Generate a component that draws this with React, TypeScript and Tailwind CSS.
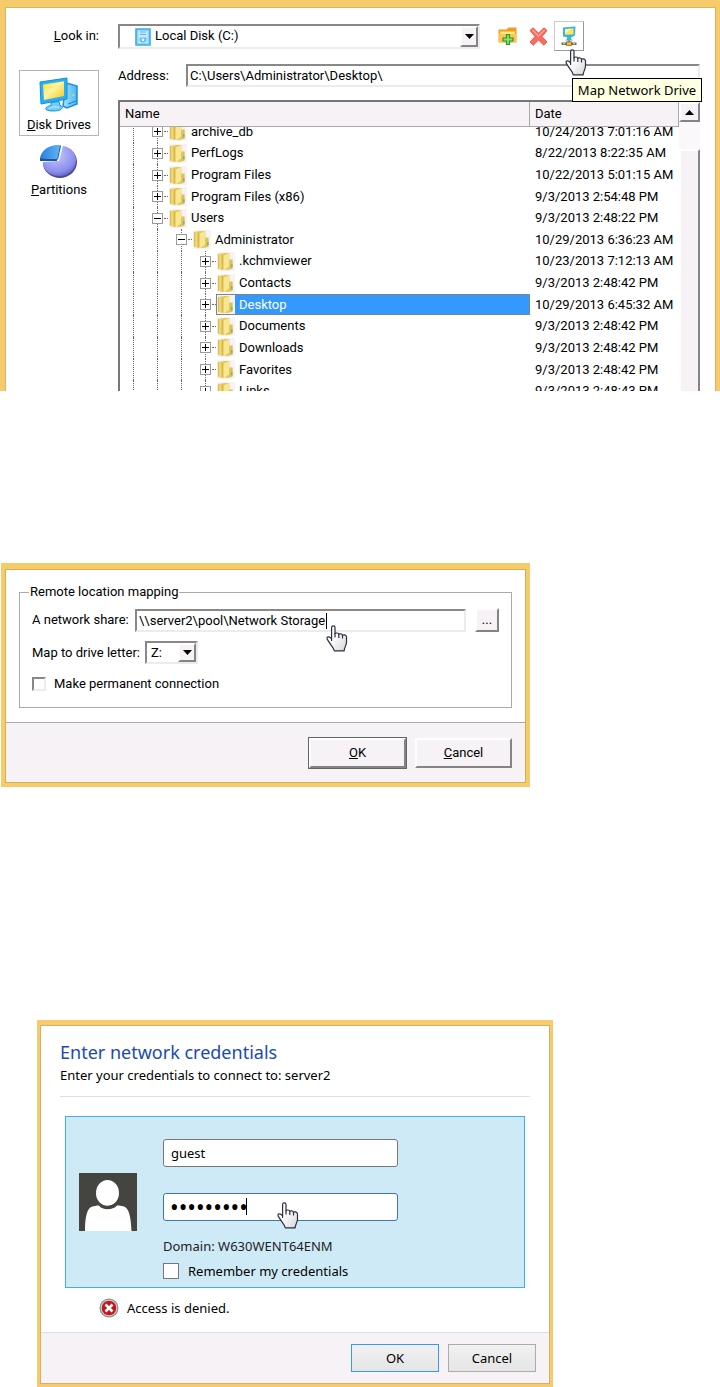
import { useLayoutEffect, useRef, useState } from 'react';

interface TreeRow {
  name: string;
  date: string;
  depth: number;
  open?: boolean;
}

const rows: TreeRow[] = [
  { name: 'archive_db', date: '10/24/2013 7:01:16 AM', depth: 1 },
  { name: 'PerfLogs', date: '8/22/2013 8:22:35 AM', depth: 1 },
  { name: 'Program Files', date: '10/22/2013 5:01:15 AM', depth: 1 },
  { name: 'Program Files (x86)', date: '9/3/2013 2:54:48 PM', depth: 1 },
  { name: 'Users', date: '9/3/2013 2:48:22 PM', depth: 1, open: true },
  { name: 'Administrator', date: '10/29/2013 6:36:23 AM', depth: 2, open: true },
  { name: '.kchmviewer', date: '10/23/2013 7:12:13 AM', depth: 3 },
  { name: 'Contacts', date: '9/3/2013 2:48:42 PM', depth: 3 },
  { name: 'Desktop', date: '10/29/2013 6:45:32 AM', depth: 3 },
  { name: 'Documents', date: '9/3/2013 2:48:42 PM', depth: 3 },
  { name: 'Downloads', date: '9/3/2013 2:48:42 PM', depth: 3 },
  { name: 'Favorites', date: '9/3/2013 2:48:42 PM', depth: 3 },
  { name: 'Links', date: '9/3/2013 2:48:43 PM', depth: 3 },
];

const sunken = 'border-2 border-t-[#888] border-l-[#888] border-r-[#ececec] border-b-[#ececec] bg-white';
const raised = 'border-2 border-t-white border-l-white border-r-[#858385] border-b-[#858385] bg-[#f6f2f6]';

/* Icons */

function HandCursor({ className }: { className: string }) {
  return (
    <svg className={`pointer-events-none absolute z-20 ${className}`} width="22" height="27" viewBox="0 0 22 27" aria-hidden="true">
      <defs>
        <linearGradient id="hand" x1="0" y1="0" x2="1" y2="1">
          <stop offset="0.4" stopColor="#fff" />
          <stop offset="1" stopColor="#d4d4d8" />
        </linearGradient>
      </defs>
      <path
        d="M5.6 15.500V2.600a1.700 1.700 0 0 1 3.400 0v6.200c.8-1.300 3.500-1 3.800.6.7-1.100 3.300-.7 3.700.9.900-1 3.700-.5 4 1.600v5.300c0 2.600-1.900 4.600-2.400 8.700H8.300C7.600 22.500 4.900 20.500 3.400 17.600 2.500 15.800.9 14.500 1 13c.3-1.900 2.900-1.500 4.600 1z"
        fill="url(#hand)"
        stroke="#2a2f42"
        strokeWidth="1.200"
        strokeLinejoin="round"
      />
      <path d="M9 8.500v4M12.800 9.200v3.800M16.500 10.300v3.200" stroke="#2a2f42" strokeWidth="1.200" />
    </svg>
  );
}

function DownArrow() {
  return (
    <svg width="9" height="5" viewBox="0 0 9 5" aria-hidden="true">
      <path d="M0 0h9L4.500 5z" fill="#000" />
    </svg>
  );
}

function FolderIcon() {
  return (
    <svg className="shrink-0" width="18" height="19" viewBox="0 0 19 20" aria-hidden="true">
      <defs>
        <linearGradient id="folder" x1="0" x2="1">
          <stop offset="0" stopColor="#d3ae35" />
          <stop offset="0.400" stopColor="#f3df86" />
          <stop offset="1" stopColor="#dcb945" />
        </linearGradient>
      </defs>
      <path d="M0 0h19v20H0z" fill="#f7f2f7" />
      <path d="M1 2l7-1h5v9l3 1v7l-5 1-9-1-1-1z" fill="#e6c95c" />
      <path d="M1 2l5 1v16l-4-1-1-1z" fill="url(#folder)" />
      <path d="M6.500 4L13 1v14l-6 4.500-1-1z" fill="#f7e793" />
      <path d="M6.300 3.500v15" stroke="#cfa93a" strokeWidth=".8" />
      <path d="M13 8h3.500v9.500L13 18z" fill="#e0c052" />
      <path d="M15 13h1.300v3H15z" fill="#4bb1b4" />
    </svg>
  );
}

function DiskIcon() {
  return (
    <svg width="16" height="18" viewBox="0 0 16 18" aria-hidden="true">
      <path d="M1 1h14v16H1z" fill="#8fd6fb" stroke="#3fa9ec" strokeWidth="1.600" />
      <path d="M3.500 3h9v12h-9z" fill="#c5ecff" />
      <path d="M5 4h6M5 6.500h6" stroke="#5ab3ea" />
      <path d="M4.500 9.500h7v3.500l-2 1.500h-3l-2-1.500z" fill="#6cc0f3" />
      <circle cx="8" cy="11.700" r="1.200" fill="#fff" />
    </svg>
  );
}

function NewFolderIcon() {
  return (
    <svg width="19" height="19" viewBox="0 0 19 19" aria-hidden="true">
      <path d="M.5 2.500h8l2-2h8v15H.5z" fill="#f79a1e" />
      <path d="M2 4.500h15v3H2z" fill="#ffe680" />
      <path d="M1 7h17v8H1z" fill="#fcc751" />
      <path d="M8.500 7.500h3v3.500H15v3h-3.500v3.500h-3V14H5v-3h3.500z" fill="#8fe070" stroke="#299a2a" strokeWidth="1.200" />
    </svg>
  );
}

function DeleteIcon() {
  return (
    <svg width="19" height="19" viewBox="0 0 19 19" aria-hidden="true">
      <path
        d="M1 3.500L4 .8l5.500 5.200L15 .8l3 2.700-5 6 5 5.500-3.300 3.200-5.200-5.200-5.200 5.200L1 15l5-5.500z"
        fill="#f46e63"
        stroke="#e8453f"
        strokeWidth=".8"
        strokeLinejoin="round"
      />
      <path d="M3.500 3l6 6 6-6" stroke="#fba59a" strokeWidth="1.300" fill="none" />
    </svg>
  );
}

function NetDriveIcon() {
  return (
    <svg width="16" height="20" viewBox="0 0 16 20" aria-hidden="true">
      <path d="M2 1.500L14.500.5l-.5 9-4 2-8-1z" fill="#35b1ee" />
      <path d="M4 3.200l8.500-1v6.300L4 8.800z" fill="#fbe94e" />
      <path d="M4 3.200l6-.7L4 8z" fill="#fff8a8" />
      <path d="M6 10.500h4v2.500l2 1.500H4l2-1.500z" fill="#35b5f4" />
      <path d="M7 14.500h2v2H7z" fill="#777" />
      <path d="M.5 16.500h15v2.500H.5z" fill="#6d6a55" />
      <path d="M5.500 15.800h5v3.700h-5z" fill="#f3bd36" stroke="#8f6b12" strokeWidth=".8" />
      <path d="M2 17.700h2M12 17.700h2" stroke="#ddd" />
    </svg>
  );
}

function ComputerIcon() {
  return (
    <svg width="40" height="36" viewBox="0 0 40 36" aria-hidden="true">
      <defs>
        <linearGradient id="screen" x1="0" y1="0" x2="1" y2="1">
          <stop offset="0" stopColor="#ffdd2c" />
          <stop offset="0.450" stopColor="#fff3a0" />
          <stop offset="1" stopColor="#f3c514" />
        </linearGradient>
        <linearGradient id="tower" x1="0" x2="1">
          <stop offset="0" stopColor="#a8e0ff" />
          <stop offset="1" stopColor="#4cb6f2" />
        </linearGradient>
      </defs>
      <path d="M27 6l11 3v18l-10 4-4-2z" fill="url(#tower)" stroke="#1c8edb" strokeWidth="1.500" />
      <path d="M29 27l8-3" stroke="#157cc9" />
      <circle cx="34.500" cy="18" r="1.200" fill="#c8dc5a" />
      <path d="M1 5l27-4v21L2 27z" fill="#29b0f2" stroke="#168ddb" />
      <path d="M4 7.500l21-3.300v14.800L5 23z" fill="url(#screen)" />
      <path d="M12 25.500l8-1 1 4c3 1 3 2 1 4-4 2-12 2-15 0-1-2 1-3 5-4z" fill="#6fcdfa" stroke="#1690dc" />
      <path d="M10 31.500c3-2 7-2 10-1" stroke="#c9f1ff" fill="none" />
    </svg>
  );
}

function PieIcon() {
  return (
    <svg width="40" height="36" viewBox="0 0 40 36" aria-hidden="true">
      <defs>
        <radialGradient id="pie" cx=".4" cy=".3" r=".8">
          <stop offset="0" stopColor="#c6c9fb" />
          <stop offset="0.700" stopColor="#8c8fec" />
          <stop offset="1" stopColor="#5657b8" />
        </radialGradient>
        <linearGradient id="slice" x1="0" x2="1">
          <stop offset="0" stopColor="#2b7fdd" />
          <stop offset="1" stopColor="#5fb4f5" />
        </linearGradient>
      </defs>
      <path d="M21 20L25 3c8 1 13 8 13 15 0 9-8 16-17 16S4 27 4 19.500z" fill="#4d4b9a" />
      <path d="M20 17L24 2c8 1 13 7 13 14 0 9-7 16-17 16C11 32 4 26 4 18z" fill="url(#pie)" />
      <path d="M18 15L21 1C11 0 2 6 1 14z" fill="url(#slice)" />
      <path d="M1 14l17 1v2L1 17z" fill="#1655a8" />
      <path d="M18 15L21 1l1 1-3 14z" fill="#1d5fb5" />
    </svg>
  );
}

function UserIcon() {
  return (
    <svg className="shrink-0" width="58" height="58" viewBox="0 0 58 58" aria-hidden="true">
      <path d="M0 0h58v58H0z" fill="#444540" />
      <path d="M6 58c0-10 1-21 6-24 3-1 6-1.500 8-1.500 3 5 14 5 18 0 3 0 6 .5 8 1.500 5 3 6 14 6.500 24z" fill="#fff" />
      <ellipse cx="28.500" cy="20" rx="11.500" ry="13" fill="#fff" />
      <path d="M20 30c4 5 13 5 17.500 0" stroke="#444540" strokeWidth="2" fill="none" />
    </svg>
  );
}

function ErrorIcon() {
  return (
    <svg width="20" height="20" viewBox="0 0 20 20" aria-hidden="true">
      <circle cx="10" cy="10" r="9.500" fill="#8f8f8f" />
      <circle cx="10" cy="10" r="8.300" fill="#d6d6d6" />
      <circle cx="10" cy="10" r="7.300" fill="#c4161c" />
      <path d="M6.500 6.500l7 7M13.500 6.500l-7 7" stroke="#fff" strokeWidth="2.600" />
    </svg>
  );
}

/* Disk browser */

function TreeItem({ row, selected, onSelect }: { row: TreeRow; selected: boolean; onSelect: () => void }) {
  return (
    <tr onClick={onSelect}>
      <td className="h-[21px] p-0">
        <div className="flex h-full">
          {Array.from({ length: row.depth }).map((_, i) => (
            <span key={i} className="w-6 shrink-0">
              <span className="block h-full w-[14px] border-r border-dotted border-[#666]" />
            </span>
          ))}
          <span className="relative flex w-6 shrink-0 items-center">
            <span className="absolute inset-y-0 left-[13px] border-r border-dotted border-[#666]" />
            <button
              aria-label={row.open ? 'Collapse' : 'Expand'}
              className="relative ml-2 flex size-[11px] items-center justify-center border border-[#9a9a9a] bg-white"
            >
              <svg width="7" height="7" viewBox="0 0 7 7" aria-hidden="true">
                <path d={row.open ? 'M0 3.500h7' : 'M0 3.500h7M3.500 0v7'} stroke="#000" />
              </svg>
            </button>
            <span className="ml-px w-1 border-t border-dotted border-[#666]" />
          </span>
          <span
            className={`flex min-w-0 flex-1 items-center gap-1 border border-dotted ${
              selected ? 'border-[#b5752c] bg-[#3399ff] text-white' : 'border-transparent'
            }`}
          >
            <FolderIcon />
            {row.name}
          </span>
        </div>
      </td>
      <td className="p-0 pl-[5px] whitespace-nowrap">{row.date}</td>
    </tr>
  );
}

function DiskBrowser() {
  const [selected, setSelected] = useState('Desktop');
  const [path, setPath] = useState('C:\\Users\\Administrator\\Desktop\\');
  const listRef = useRef<HTMLDivElement>(null);

  // Leave the first row partly scrolled under the header
  useLayoutEffect(() => {
    if (listRef.current) listRef.current.scrollTop = 6;
  }, []);

  return (
    <section className="border-x-[5px] border-t-[7px] border-r-4 border-[#f7cb6b] text-[13px] leading-4">
      <div className="flex flex-col gap-[13px] border-x border-t border-[#dcb460] bg-white pt-[13px] pr-[15px] pl-[13px]">
        <div className="flex h-[30px] items-center">
          <label htmlFor="look-in" className="w-20 shrink-0 text-right">
            <u>L</u>ook in:
          </label>
          <div className="relative ml-[19px] flex-1">
            <select id="look-in" className={`h-[25px] w-full appearance-none pl-[35px] ${sunken}`}>
              <option>Local Disk (C:)</option>
            </select>
            <span className="pointer-events-none absolute top-1 left-[17px]">
              <DiskIcon />
            </span>
            <span className={`pointer-events-none absolute top-[2px] right-[2px] bottom-[2px] flex w-[18px] items-center justify-center ${raised}`}>
              <DownArrow />
            </span>
          </div>
          <div className="relative mr-29 ml-[18px] flex items-center gap-3">
            <button aria-label="New folder">
              <NewFolderIcon />
            </button>
            <button aria-label="Delete">
              <DeleteIcon />
            </button>
            <button
              aria-label="Map network drive"
              aria-describedby="map-tip"
              className="-ml-[6px] flex size-[30px] items-center justify-center border border-t-[#ccc] border-l-[#ccc] border-r-[#999] border-b-[#999]"
            >
              <NetDriveIcon />
            </button>
            <HandCursor className="top-[28px] left-[67px]" />
            <span
              id="map-tip"
              role="tooltip"
              className="absolute top-[57px] left-[74px] z-10 flex h-6 w-[130px] items-center justify-center border border-black bg-[#ffffe1] font-['Noto_Sans',sans-serif] text-[13px] whitespace-nowrap"
            >
              Map Network Drive
            </span>
          </div>
        </div>

        <div className="flex gap-[19px]">
          <nav className="mt-[6px] flex w-20 shrink-0 flex-col gap-2">
            <button className="flex h-[66px] flex-col items-center justify-end gap-1 border border-[#b5b5b5] pb-[2px]">
              <ComputerIcon />
              <span>
                <u>D</u>isk Drives
              </span>
            </button>
            <button className="flex flex-col items-center gap-[2px]">
              <PieIcon />
              <span>
                <u>P</u>artitions
              </span>
            </button>
          </nav>

          <div className="flex min-w-0 flex-1 flex-col gap-[13px]">
            <div className="flex h-[23px] items-center">
              <label htmlFor="address" className="w-[68px] shrink-0">
                Address:
              </label>
              <input
                id="address"
                value={path}
                onChange={(e) => setPath(e.target.value)}
                className={`h-full min-w-0 flex-1 px-[2px] ${sunken}`}
              />
            </div>

            <div className="flex h-[291px] border-t-2 border-l-2 border-[#777]">
              <div ref={listRef} className="min-w-0 flex-1 overflow-hidden">
                <table className="h-[306px] w-full table-fixed border-separate border-spacing-0">
                  <thead>
                    <tr>
                      <th className="sticky top-0 z-10 h-[25px] border-r border-b border-[#aaa] bg-[#f6f2f6] p-0 pl-[5px] text-left font-normal">
                        Name
                      </th>
                      <th className="sticky top-0 z-10 h-[25px] w-[149px] border-r border-b border-[#aaa] bg-[#f6f2f6] p-0 pl-[5px] text-left font-normal">
                        Date
                      </th>
                    </tr>
                  </thead>
                  <tbody>
                    {rows.map((row) => (
                      <TreeItem key={row.name} row={row} selected={row.name === selected} onSelect={() => setSelected(row.name)} />
                    ))}
                  </tbody>
                </table>
              </div>
              <div className="flex w-[21px] flex-col bg-[#fbf8fb]">
                <button aria-label="Scroll up" className={`flex h-5 items-center justify-center ${raised}`}>
                  <svg width="9" height="5" viewBox="0 0 9 5" aria-hidden="true">
                    <path d="M0 5h9L4.500 0z" fill="#000" />
                  </svg>
                </button>
                <div className={`mt-[27px] flex-1 border-b-0 ${raised}`} />
              </div>
            </div>
          </div>
        </div>
      </div>
    </section>
  );
}

/* Map drive dialog */

function MapDriveDialog() {
  const [share, setShare] = useState('\\\\server2\\pool\\Network Storage');

  return (
    <form
      onSubmit={(e) => e.preventDefault()}
      className="mt-[172px] ml-px w-full max-w-[529px] border-4 border-t-[6px] border-[#f7cb6b] text-[13px] leading-4"
    >
      <div className="border border-[#dcac50] bg-white">
        <div className="px-[13px] pt-[14px] pb-[14px]">
          <fieldset className="border border-[#aaa] px-3 pb-[15px]">
            <legend className="-ml-[3px] px-px">Remote location mapping</legend>
            <div className="mt-2 flex items-center">
              <label htmlFor="share" className="w-[103px] shrink-0 whitespace-nowrap">
                A network share:
              </label>
              <div className="relative min-w-0 flex-1">
                <input
                  id="share"
                  value={share}
                  onChange={(e) => setShare(e.target.value)}
                  className={`block h-[23px] w-full px-[2px] ${sunken}`}
                />
                <span className="absolute top-1 left-[191px] h-4 w-px bg-black" />
                <HandCursor className="top-4 left-[191px]" />
              </div>
              <button type="button" className={`ml-[9px] h-6 w-6 ${raised}`}>
                ...
              </button>
            </div>
            <div className="mt-[9px] flex items-center">
              <label htmlFor="letter" className="w-[113px] shrink-0 whitespace-nowrap">
                Map to drive letter:
              </label>
              <div className="relative">
                <select id="letter" className={`block h-[23px] w-[53px] appearance-none pl-1 ${sunken}`}>
                  <option>Z:</option>
                </select>
                <span className={`pointer-events-none absolute top-[2px] right-[2px] bottom-[2px] flex w-[18px] items-center justify-center ${raised}`}>
                  <DownArrow />
                </span>
              </div>
            </div>
            <label className="mt-3 flex items-center gap-2">
              <input type="checkbox" className={`size-[14px] appearance-none ${sunken}`} />
              Make permanent connection
            </label>
          </fieldset>
        </div>
        <footer className="flex h-[60px] items-center justify-end gap-2 border-t border-[#aaa] bg-[#f6f2f6] pr-[13px]">
          <div className="border border-[#666]">
            <button className={`block h-[30px] w-[97px] ${raised}`}>
              <u>O</u>K
            </button>
          </div>
          <button type="button" className={`h-[30px] w-[97px] ${raised}`}>
            <u>C</u>ancel
          </button>
        </footer>
      </div>
    </form>
  );
}

/* Credentials dialog */

function CredentialsDialog() {
  const [user, setUser] = useState('guest');
  const [password, setPassword] = useState('guestpass');

  return (
    <form
      onSubmit={(e) => e.preventDefault()}
      className="mt-[233px] ml-[37px] w-full max-w-[516px] border-[3px] border-t-[5px] border-[#f7cb6b] font-['Noto_Sans',sans-serif] text-[13px] leading-4"
    >
      <div className="border border-[#d3b06a] bg-white">
        <header className="mx-[19px] border-b border-[#e0e0e0] pt-[14px] pb-3">
          <h2 className="text-[18px] leading-6 text-[#1a4ab0]">Enter network credentials</h2>
          <p className="mt-[2px] leading-[18px]">Enter your credentials to connect to: server2</p>
        </header>

        <div className="mx-6 mt-[19px] flex h-[172px] border border-[#3eb0e4] bg-[#cfeaf7] pl-[13px]">
          <div className="mt-14">
            <UserIcon />
          </div>
          <div className="mt-[22px] ml-[26px] w-[235px]">
            <input
              aria-label="User name"
              value={user}
              onChange={(e) => setUser(e.target.value)}
              className="block h-7 w-full rounded-[3px] border border-[#777] bg-white px-[7px]"
            />
            <div className="relative mt-[26px]">
              <input
                type="password"
                aria-label="Password"
                value={password}
                onChange={(e) => setPassword(e.target.value)}
                className="block h-7 w-full rounded-[3px] border border-[#3f77a5] bg-white px-[6px] text-[23px]"
              />
              <span className="absolute top-[5px] left-[83px] h-[17px] w-px bg-black" />
              <HandCursor className="top-[9px] left-[114px]" />
            </div>
            <p className="mt-[17px] text-[#222] whitespace-nowrap">Domain: W630WENT64ENM</p>
            <label className="mt-[9px] flex items-center gap-[9px] whitespace-nowrap">
              <input type="checkbox" className="size-4 appearance-none border border-[#777] bg-white" />
              Remember my credentials
            </label>
          </div>
        </div>

        <p className="mt-[10px] ml-[58px] flex items-center gap-2">
          <ErrorIcon />
          Access is denied.
        </p>

        <footer className="mt-[14px] flex h-[51px] items-center justify-end gap-[9px] border-t border-[#ddd] bg-[#f6f2f6] pr-[13px]">
          <button className="h-7 w-22 border border-[#3399ff] bg-linear-to-b from-[#f1f1f1] to-[#e5e5e5]">OK</button>
          <button type="button" className="h-7 w-22 border border-[#acacac] bg-linear-to-b from-[#f1f1f1] to-[#e5e5e5]">
            Cancel
          </button>
        </footer>
      </div>
    </form>
  );
}

export default function App() {
  return (
    <main className="bg-white font-['Roboto',sans-serif] text-black">
      <DiskBrowser />
      <MapDriveDialog />
      <CredentialsDialog />
    </main>
  );
}
